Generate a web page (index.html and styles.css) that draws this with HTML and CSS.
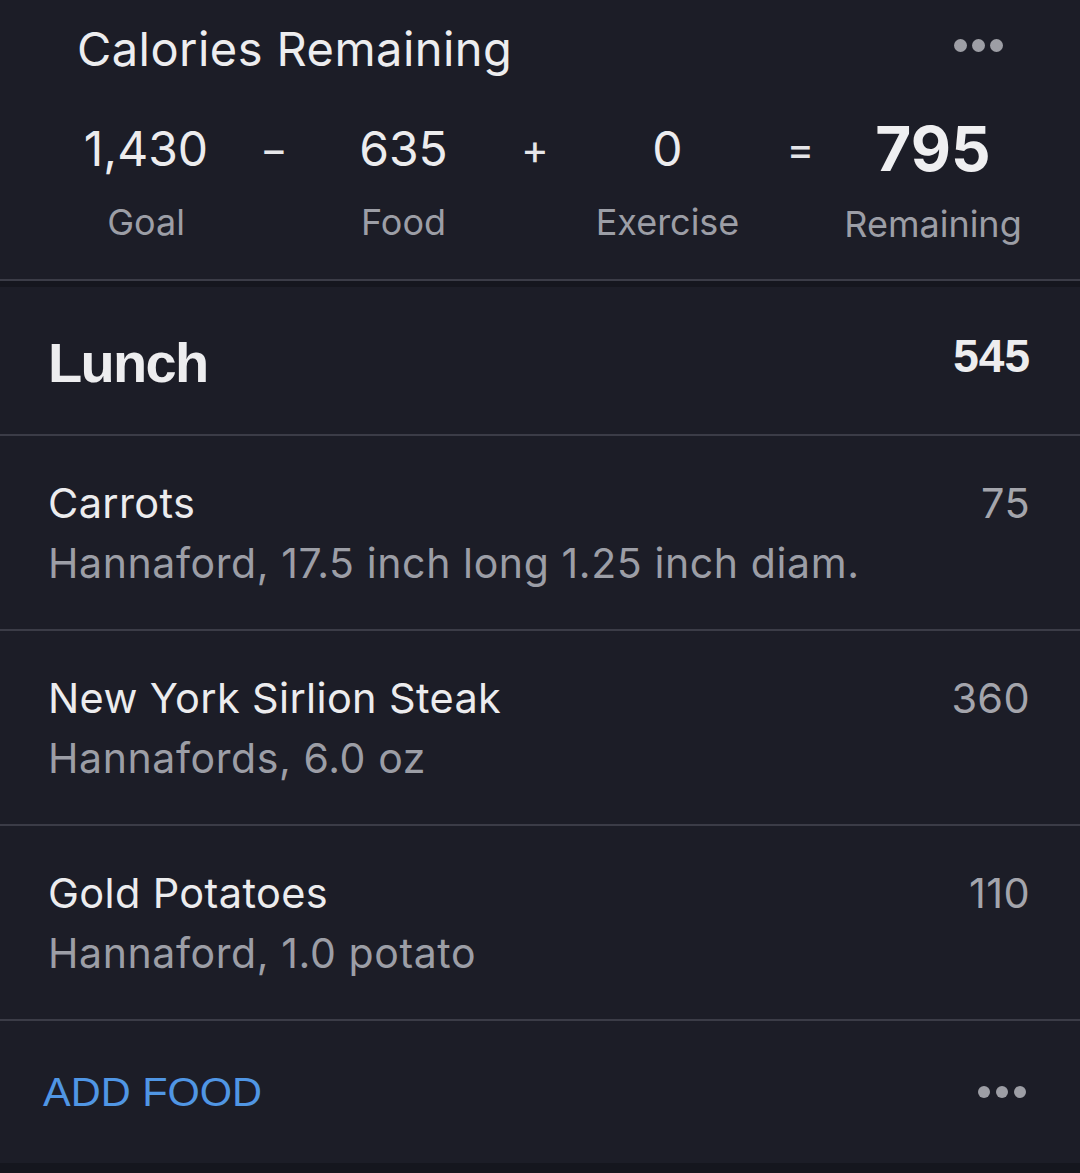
FILE: index.html
```html
<!DOCTYPE html>
<html lang="en">
<head>
<meta charset="utf-8">
<title>Diary</title>
<link rel="stylesheet" href="styles.css">
</head>
<body>
<div class="app">
  <section class="summary">
    <div class="summary-head">
      <h1 class="summary-title">Calories Remaining</h1>
      <span class="dots dots-top"><i></i><i></i><i></i></span>
    </div>
    <div class="equation">
      <span class="num">1,430</span>
      <span class="op">−</span>
      <span class="num">635</span>
      <span class="op">+</span>
      <span class="num">0</span>
      <span class="op">=</span>
      <span class="num num-big">795</span>
      <span class="lbl">Goal</span>
      <span class="lbl lbl-3">Food</span>
      <span class="lbl lbl-5">Exercise</span>
      <span class="lbl lbl-7">Remaining</span>
    </div>
  </section>
  <div class="divider"></div>
  <section class="meal">
    <div class="meal-head">
      <h2 class="meal-name">Lunch</h2>
      <span class="meal-total">545</span>
    </div>
    <div class="food">
      <div class="food-info">
        <div class="food-name">Carrots</div>
        <div class="food-desc">Hannaford, 17.5 inch long 1.25 inch diam.</div>
      </div>
      <div class="food-cal">75</div>
    </div>
    <div class="food">
      <div class="food-info">
        <div class="food-name">New York Sirlion Steak</div>
        <div class="food-desc">Hannafords, 6.0 oz</div>
      </div>
      <div class="food-cal">360</div>
    </div>
    <div class="food">
      <div class="food-info">
        <div class="food-name">Gold Potatoes</div>
        <div class="food-desc">Hannaford, 1.0 potato</div>
      </div>
      <div class="food-cal">110</div>
    </div>
    <div class="meal-foot">
      <span class="add-food">ADD FOOD</span>
      <span class="dots dots-foot"><i></i><i></i><i></i></span>
    </div>
  </section>
  <div class="bottom-band"></div>
</div>
</body>
</html>
```

FILE: styles.css
```css
html, body {
  margin: 0;
  padding: 0;
  background: #1c1d27;
}
body {
  width: 1080px;
  height: 1173px;
  overflow: hidden;
  font-family: "Inter", "Noto Sans", sans-serif;
  color: #ececee;
}
.app {
  display: flex;
  flex-direction: column;
  height: 1173px;
}

/* summary */
.summary {
  height: 279px;
  box-sizing: border-box;
  padding-top: 25px;
}
.summary-head {
  display: flex;
  align-items: center;
  justify-content: space-between;
  padding: 0 77px 0 77px;
}
.summary-title {
  margin: 0;
  font-size: 47px;
  line-height: 47px;
  font-weight: 400;
  letter-spacing: 0.45px;
  color: #ededef;
}
.dots {
  display: flex;
  gap: 6px;
}
.dots i {
  display: block;
  width: 12px;
  height: 12px;
  border-radius: 50%;
  background: #9d9ea5;
}
.dots-top {
  margin-bottom: 6px;
  gap: 5px;
}
.dots-top i {
  width: 13px;
  height: 13px;
}
.equation {
  display: grid;
  grid-template-columns: 128px 128px 131px 132px 133px 133px 132px;
  grid-template-rows: 62px 36px;
  row-gap: 24px;
  align-items: center;
  padding-left: 82px;
  margin-top: 46px;
}
.num, .op, .lbl {
  display: flex;
  justify-content: center;
  white-space: nowrap;
}
.num {
  font-size: 48px;
  line-height: 48px;
  color: #ececee;
}
.num-big {
  font-size: 62px;
  line-height: 62px;
  font-weight: 700;
  color: #efeff1;
}
.op {
  font-size: 42px;
  line-height: 48px;
  color: #e6e6e9;
}
.lbl {
  grid-row: 2;
  grid-column: 1;
  font-size: 36px;
  line-height: 36px;
  color: #9c9ea6;
}
.lbl-3 { grid-column: 3; }
.lbl-5 { grid-column: 5; }
.lbl-7 { grid-column: 7; margin-top: 4px; }

.divider {
  height: 6px;
  border-top: 2px solid #3b3c47;
  background: #15161e;
}

/* meal */
.meal {
  display: flex;
  flex-direction: column;
}
.meal-head {
  box-sizing: border-box;
  height: 149px;
  display: flex;
  justify-content: space-between;
  align-items: flex-start;
  padding: 48px 50px 0 48px;
  border-bottom: 2px solid #3b3c47;
}
.meal-name {
  margin: 0;
  font-family: "Liberation Sans", Arial, sans-serif;
  font-size: 56px;
  line-height: 56px;
  font-weight: 700;
  letter-spacing: -1.7px;
  color: #ededef;
}
.meal-total {
  font-family: "Liberation Sans", Arial, sans-serif;
  font-size: 46px;
  line-height: 46px;
  font-weight: 700;
  color: #ededef;
  margin-top: -2px;
}
.food {
  height: 195px;
  box-sizing: border-box;
  display: flex;
  justify-content: space-between;
  align-items: flex-start;
  padding: 37px 50px 0 48px;
  border-bottom: 2px solid #3b3c47;
}
.food-name {
  font-size: 41.5px;
  line-height: 60px;
  letter-spacing: 0.35px;
  color: #ececee;
}
.food-desc {
  font-size: 41px;
  line-height: 60px;
  letter-spacing: 0.6px;
  color: #9c9ea6;
}
.food-cal {
  font-size: 41.5px;
  line-height: 60px;
  letter-spacing: 0.35px;
  color: #a4a5ac;
}
.meal-foot {
  height: 142px;
  display: flex;
  align-items: center;
  justify-content: space-between;
  padding: 0 54px 0 43px;
}
.add-food {
  font-family: "Liberation Sans", Arial, sans-serif;
  font-size: 41.5px;
  line-height: 42px;
  color: #5096e4;
}
.bottom-band {
  flex: 1;
  background: #15161e;
}
```
